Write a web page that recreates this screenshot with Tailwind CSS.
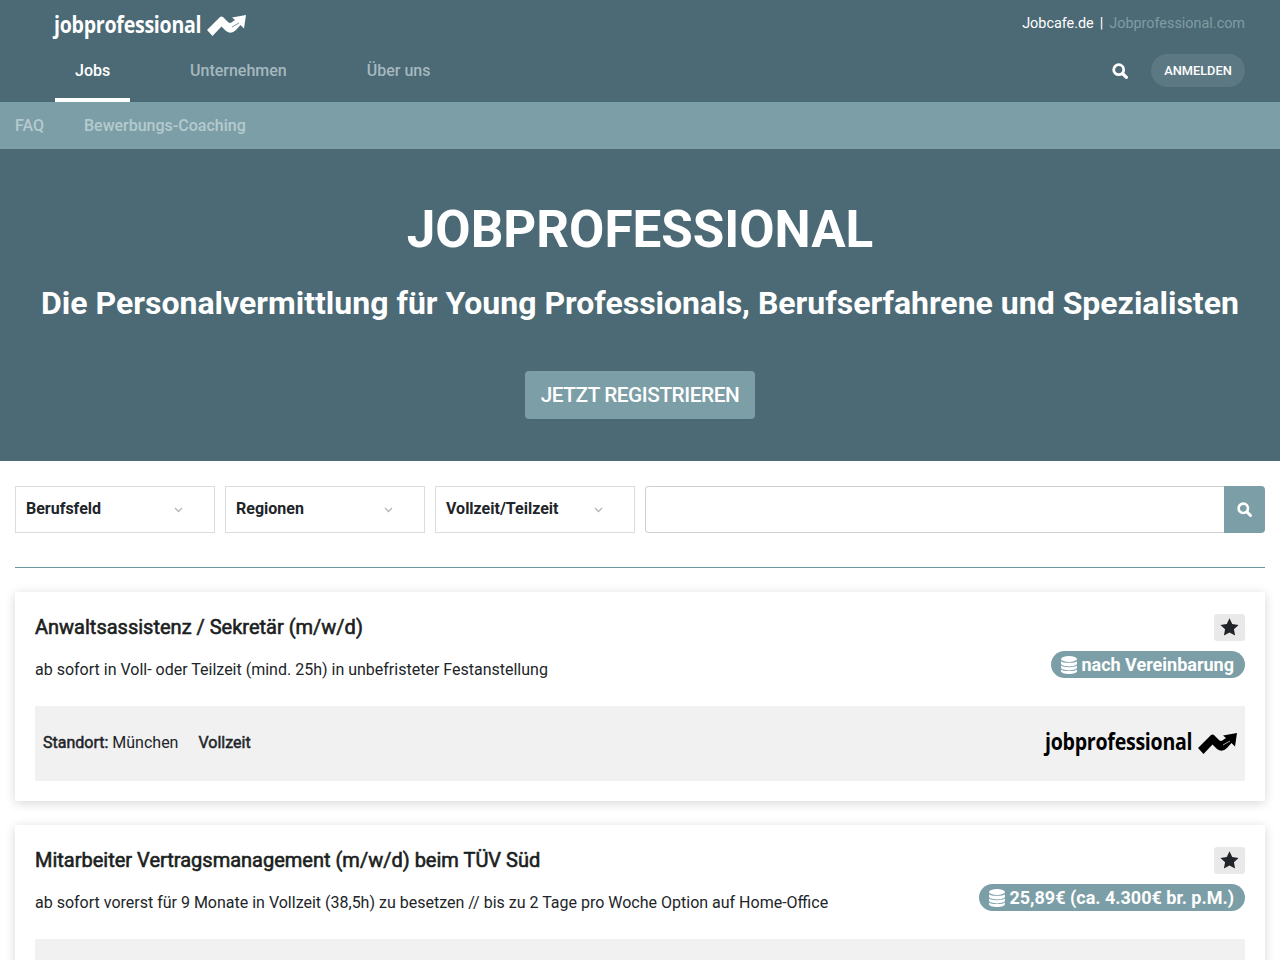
<!DOCTYPE html>
<html lang="de">
<head>
    <meta charset="UTF-8">
    <meta name="viewport" content="width=device-width, initial-scale=1.0">
    <title>Jobprofessional</title>
    <script src="https://cdn.jsdelivr.net/npm/@tailwindcss/browser@4"></script>
</head>
<body class="bg-white font-['Roboto',sans-serif] text-[#212529] h-[960px] overflow-hidden">
    <!-- Header -->
    <header class="bg-[#4b6a75] h-[102px] pl-[55px] pr-[35px] flex flex-col">
        <div class="flex justify-between h-[46px]">
            <a class="flex items-start pt-[10px] text-white">
                <span class="font-['Open_Sans',sans-serif] font-bold text-[22.5px] leading-[30px] tracking-[-0.3px] ml-[-1px] w-[153px] scale-x-[0.87] origin-left whitespace-nowrap">jobprofessional</span>
                <svg class="mt-[5px]" width="39" height="21" viewBox="0 0 39 21" fill="currentColor">
                    <path d="M0 15 L13 2 Q14.5 1 16 2 L21 7 Q23 9 25 7 L28 5 L25 2.5 L39 0 L37 13.5 L33.5 10 L29 15 Q24 20 19 16 L14.5 11.5 L5.5 21 Z"/>
                    <path d="M25 12 L32 8" stroke="#4b6a75" stroke-width="0.7" fill="none"/>
                </svg>
            </a>
            <div class="flex items-start pt-[15px] text-[14.4px] leading-[18px]">
                <span class="text-white">Jobcafe.de</span>
                <span class="text-white mx-[6px]">|</span>
                <span class="text-[#7f9ca5]">Jobprofessional.com</span>
            </div>
        </div>
        <div class="flex justify-between flex-1">
            <nav class="flex font-medium text-base">
                <a class="px-5 w-[75px] pt-[13px] text-white border-b-[4px] border-white">Jobs</a>
                <a class="ml-[60px] pt-[13px] text-[#a5b8bf]">Unternehmen</a>
                <a class="ml-[80px] pt-[13px] text-[#a5b8bf]">Über uns</a>
            </nav>
            <div class="flex items-start pt-[8px]">
                <svg class="mt-[9px] mr-[23px]" width="16" height="16" viewBox="0 0 16 16" fill="none" stroke="white">
                    <circle cx="6.7" cy="6.7" r="5" stroke-width="2.8"/>
                    <path d="M10.5 10.5 L14.4 14.4" stroke-width="3.2" stroke-linecap="round"/>
                </svg>
                <a class="bg-[#5c7983] text-white text-[12.8px] font-medium h-[33px] w-[94px] rounded-full flex items-center justify-center">ANMELDEN</a>
            </div>
        </div>
    </header>

    <!-- Subnav -->
    <div class="bg-[#7c9ea6] h-[47px] px-[15px] flex items-center gap-[40px] font-medium text-base text-[#b4cacf]">
        <a>FAQ</a>
        <a>Bewerbungs-Coaching</a>
    </div>

    <!-- Hero -->
    <section class="bg-[#4b6a75] h-[312px] flex flex-col items-center text-white">
        <h1 class="font-bold text-[51.2px] leading-[60px] mt-[51px]">JOBPROFESSIONAL</h1>
        <h2 class="font-bold text-[32px] leading-[36px] mt-[25px] whitespace-nowrap">Die Personalvermittlung für Young Professionals, Berufserfahrene und Spezialisten</h2>
        <a class="bg-[#7c9ea6] rounded-[4px] w-[230px] h-[48px] mt-[50px] pt-[1px] flex items-center justify-center text-[20.8px] font-medium tracking-[-0.45px]">JETZT REGISTRIEREN</a>
    </section>

    <!-- Filters -->
    <div class="flex gap-[10px] px-[15px] pt-[25px]">
        <div class="w-[200px] h-[47px] border border-[#dcdcdc] pl-[10px] pr-[31px] flex items-center justify-between text-base">
            <span class="mb-[2px] font-bold">Berufsfeld</span>
            <svg width="9" height="6" viewBox="0 0 9 6" fill="none" stroke="#b5b5b5" stroke-width="1.3"><path d="M1 1 L4.5 4.5 L8 1"/></svg>
        </div>
        <div class="w-[200px] h-[47px] border border-[#dcdcdc] pl-[10px] pr-[31px] flex items-center justify-between text-base">
            <span class="mb-[2px] font-bold">Regionen</span>
            <svg width="9" height="6" viewBox="0 0 9 6" fill="none" stroke="#b5b5b5" stroke-width="1.3"><path d="M1 1 L4.5 4.5 L8 1"/></svg>
        </div>
        <div class="w-[200px] h-[47px] border border-[#dcdcdc] pl-[10px] pr-[31px] flex items-center justify-between text-base">
            <span class="mb-[2px] font-bold">Vollzeit/Teilzeit</span>
            <svg width="9" height="6" viewBox="0 0 9 6" fill="none" stroke="#b5b5b5" stroke-width="1.3"><path d="M1 1 L4.5 4.5 L8 1"/></svg>
        </div>
        <div class="flex-1 h-[47px] flex">
            <div class="flex-1 border border-r-0 border-[#cfcfcf] rounded-l-[4px]"></div>
            <button class="w-[41px] bg-[#7c9ea6] rounded-r-[4px] flex items-center justify-center">
                <svg width="15" height="15" viewBox="0 0 16 16" fill="none" stroke="white">
                    <circle cx="6.7" cy="6.7" r="5" stroke-width="2.8"/>
                    <path d="M10.5 10.5 L14.4 14.4" stroke-width="3.2" stroke-linecap="round"/>
                </svg>
            </button>
        </div>
    </div>

    <div class="mx-[15px] mt-[34px] h-px bg-[#6a9a9e]"></div>

    <!-- Job list -->
    <main class="px-[15px] pt-[24px] flex flex-col gap-[24px]">
        <article class="bg-white shadow-[0_2px_10px_rgba(0,0,0,0.16)] h-[209px] px-5 pt-[22px]">
            <div class="flex justify-between h-[92px]">
                <div>
                    <h3 class="text-xl leading-[28px] -mt-px [-webkit-text-stroke:0.6px] text-[#1c1f22]">Anwaltsassistenz / Sekretär (m/w/d)</h3>
                    <p class="text-base leading-6 mt-[17px]">ab sofort in Voll- oder Teilzeit (mind. 25h) in unbefristeter Festanstellung</p>
                </div>
                <div class="flex flex-col items-end">
                    <button class="w-[31px] h-[27px] bg-[#e9e9e9] rounded-[3px] flex items-center justify-center">
                        <svg class="-mt-px" width="19" height="18" viewBox="0 0 18 17" fill="#212529"><path d="M9 0.3 L11.6 5.7 L17.6 6.5 L13.2 10.6 L14.3 16.6 L9 13.7 L3.7 16.6 L4.8 10.6 L0.4 6.5 L6.4 5.7 Z"/></svg>
                    </button>
                    <span class="mt-[10px] h-[27px] rounded-full bg-[#7c9ea6] text-white font-bold text-lg pl-[10px] pr-[11px] flex items-center gap-[4px]">
                        <svg width="16" height="18" viewBox="0 0 16 18" fill="white"><ellipse cx="8" cy="3" rx="8" ry="3"/><path d="M0 5.2 C2 7.4 14 7.4 16 5.2 V7.5 C16 9.2 12.5 10.4 8 10.4 C3.5 10.4 0 9.2 0 7.5 Z"/><path d="M0 9.6 C2 11.8 14 11.8 16 9.6 V11.6 C16 13.3 12.5 14.4 8 14.4 C3.5 14.4 0 13.3 0 11.6 Z"/><path d="M0 13.4 C2 15.6 14 15.6 16 13.4 V15 C16 16.8 12.5 18 8 18 C3.5 18 0 16.8 0 15 Z"/></svg>
                        nach Vereinbarung
                    </span>
                </div>
            </div>
            <div class="bg-[#f1f1f1] h-[75px] px-2 flex items-center justify-between">
                <div class="flex text-base gap-5 -mt-[1px]">
                    <span><b class="font-normal [-webkit-text-stroke:0.5px]">Standort:</b> München</span>
                    <b class="font-normal [-webkit-text-stroke:0.5px]">Vollzeit</b>
                </div>
                <div class="flex items-center text-black">
                    <span class="font-['Open_Sans',sans-serif] font-bold text-[22.5px] leading-[30px] tracking-[-0.3px] mb-[4px] w-[153px] scale-x-[0.87] origin-left whitespace-nowrap">jobprofessional</span>
                    <svg width="39" height="21" viewBox="0 0 39 21" fill="currentColor">
                        <path d="M0 15 L13 2 Q14.5 1 16 2 L21 7 Q23 9 25 7 L28 5 L25 2.5 L39 0 L37 13.5 L33.5 10 L29 15 Q24 20 19 16 L14.5 11.5 L5.5 21 Z"/>
                        <path d="M25 12 L32 8" stroke="#f1f1f1" stroke-width="0.7" fill="none"/>
                    </svg>
                </div>
            </div>
        </article>

        <article class="bg-white shadow-[0_2px_10px_rgba(0,0,0,0.16)] h-[209px] px-5 pt-[22px]">
            <div class="flex justify-between h-[92px]">
                <div>
                    <h3 class="text-xl leading-[28px] -mt-px [-webkit-text-stroke:0.6px] text-[#1c1f22]">Mitarbeiter Vertragsmanagement (m/w/d) beim TÜV Süd</h3>
                    <p class="text-base leading-6 mt-[17px]">ab sofort vorerst für 9 Monate in Vollzeit (38,5h) zu besetzen // bis zu 2 Tage pro Woche Option auf Home-Office</p>
                </div>
                <div class="flex flex-col items-end">
                    <button class="w-[31px] h-[27px] bg-[#e9e9e9] rounded-[3px] flex items-center justify-center">
                        <svg class="-mt-px" width="19" height="18" viewBox="0 0 18 17" fill="#212529"><path d="M9 0.3 L11.6 5.7 L17.6 6.5 L13.2 10.6 L14.3 16.6 L9 13.7 L3.7 16.6 L4.8 10.6 L0.4 6.5 L6.4 5.7 Z"/></svg>
                    </button>
                    <span class="mt-[10px] h-[27px] rounded-full bg-[#7c9ea6] text-white font-bold text-lg pl-[10px] pr-[11px] flex items-center gap-[4px]">
                        <svg width="16" height="18" viewBox="0 0 16 18" fill="white"><ellipse cx="8" cy="3" rx="8" ry="3"/><path d="M0 5.2 C2 7.4 14 7.4 16 5.2 V7.5 C16 9.2 12.5 10.4 8 10.4 C3.5 10.4 0 9.2 0 7.5 Z"/><path d="M0 9.6 C2 11.8 14 11.8 16 9.6 V11.6 C16 13.3 12.5 14.4 8 14.4 C3.5 14.4 0 13.3 0 11.6 Z"/><path d="M0 13.4 C2 15.6 14 15.6 16 13.4 V15 C16 16.8 12.5 18 8 18 C3.5 18 0 16.8 0 15 Z"/></svg>
                        25,89€ (ca. 4.300€ br. p.M.)
                    </span>
                </div>
            </div>
            <div class="bg-[#f1f1f1] h-[75px]"></div>
        </article>
    </main>
</body>
</html>
